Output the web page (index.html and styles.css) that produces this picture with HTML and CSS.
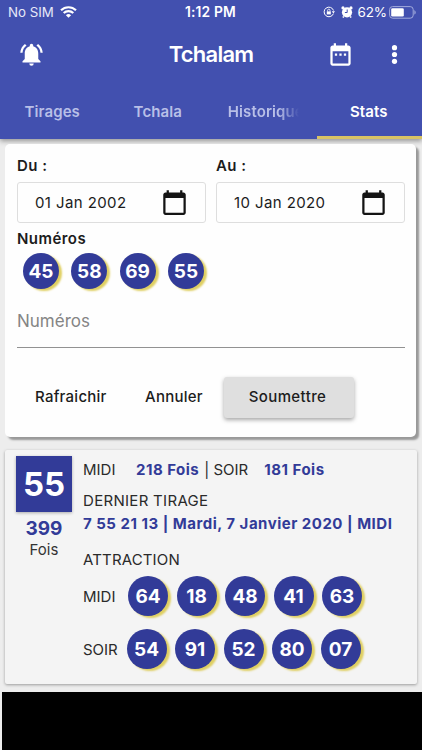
FILE: index.html
```
<!DOCTYPE html>
<html lang="fr">
<head>
<meta charset="utf-8">
<title>Tchalam</title>
<link rel="stylesheet" href="styles.css">
</head>
<body>
<div class="app">
  <header class="header">
    <div class="status">
      <div class="status-left">
        <span class="carrier">No SIM</span>
        <svg class="wifi" width="17" height="12" viewBox="0 0 17 12" fill="none" stroke="#fff" stroke-width="2.1"><path d="M1 4.3a10.7 10.7 0 0 1 15 0M3.7 7.1a6.8 6.8 0 0 1 9.6 0"/><path d="M8.5 11.8 5.9 9.2a3.8 3.8 0 0 1 5.2 0z" fill="#fff" stroke="none"/></svg>
      </div>
      <span class="clock">1:12 PM</span>
      <div class="status-right">
        <svg width="12" height="12" viewBox="0 0 12 12" fill="none" stroke="#fff"><path d="M10.4 7.7A4.8 4.8 0 1 1 10.5 4.5"/><path d="M8.8 5.2h3.2L10.4 7.4z" fill="#fff" stroke="none"/><rect x="3.8" y="5.4" width="4" height="3" fill="#fff" stroke="none"/><path d="M4.6 5.6V4.4a1.2 1.2 0 0 1 2.4 0v1.2" stroke-width=".8"/></svg>
        <svg class="alarm" width="12" height="12" viewBox="0 0 12 12"><g fill="#fff"><circle cx="6" cy="6.3" r="5.1"/><circle cx="2" cy="1.9" r="1.6"/><circle cx="10" cy="1.9" r="1.6"/><path d="m2 9.8 1.4 1.1-1 1.1-1-.8zM10 9.8l-1.4 1.1 1 1.1 1-.8z"/></g><path d="M6.2 3.5v3H3.9" fill="none" stroke="#4250af"/></svg>
        <span class="percent">62%</span>
        <svg class="battery" width="27" height="13" viewBox="0 0 27 13"><rect x=".6" y=".6" width="23.6" height="11.6" rx="3" fill="none" stroke="#a3abdc"/><rect x="2.2" y="2.2" width="12.6" height="8.4" rx="1.3" fill="#fff"/><path d="M25.4 4.2c1.7.7 1.7 3.7 0 4.4z" fill="#a3abdc"/></svg>
      </div>
    </div>
    <div class="toolbar">
      <svg class="bell" width="27" height="27" viewBox="0 0 24 24" fill="#fff"><path d="M7.58 4.08 6.15 2.65C3.75 4.48 2.17 7.3 2.03 10.5h2c.15-2.65 1.51-4.97 3.55-6.42zm12.39 6.42h2c-.15-3.2-1.73-6.02-4.12-7.85l-1.42 1.43c2.02 1.45 3.39 3.77 3.54 6.42z"/><path d="M18 11c0-3.07-1.64-5.64-4.5-6.32V4c0-.83-.67-1.5-1.5-1.5s-1.5.67-1.5 1.5v.68C7.63 5.36 6 7.92 6 11v5l-2 2v1h16v-1l-2-2z"/><path d="M10 20h4a2 2 0 0 1-4 0z"/></svg>
      <h1 class="title">Tchalam</h1>
      <div class="actions">
        <svg width="27" height="27" viewBox="0 0 24 24" fill="#fff"><path d="M9 11H7v2h2v-2zm4 0h-2v2h2v-2zm4 0h-2v2h2v-2zm2-7h-1V2h-2v2H8V2H6v2H5c-1.11 0-1.99.9-1.99 2L3 20c0 1.1.89 2 2 2h14c1.1 0 2-.9 2-2V6c0-1.1-.9-2-2-2zm0 16H5V9h14v11z"/></svg>
        <svg width="27" height="27" viewBox="0 0 27 27" fill="#fff"><circle cx="13.5" cy="6.7" r="2.6"/><circle cx="13.5" cy="13.5" r="2.6"/><circle cx="13.5" cy="20.3" r="2.6"/></svg>
      </div>
    </div>
    <nav class="tabs">
      <span class="tab">Tirages</span>
      <span class="tab">Tchala</span>
      <span class="tab"><span class="fade">Historique</span></span>
      <span class="tab active">Stats</span>
    </nav>
  </header>

  <section class="card search">
    <div class="dates">
      <div class="field">
        <span class="label">Du :</span>
        <div class="date"><span>01 Jan 2002</span>
          <svg width="27" height="27" viewBox="0 0 24 24" fill="#141414"><path d="M20 3h-1V1h-2v2H7V1H5v2H4c-1.1 0-2 .9-2 2v16c0 1.1.9 2 2 2h16c1.1 0 2-.9 2-2V5c0-1.1-.9-2-2-2zm0 18H4V8h16v13z"/></svg></div>
      </div>
      <div class="field">
        <span class="label">Au :</span>
        <div class="date"><span>10 Jan 2020</span>
          <svg width="27" height="27" viewBox="0 0 24 24" fill="#141414"><path d="M20 3h-1V1h-2v2H7V1H5v2H4c-1.1 0-2 .9-2 2v16c0 1.1.9 2 2 2h16c1.1 0 2-.9 2-2V5c0-1.1-.9-2-2-2zm0 18H4V8h16v13z"/></svg></div>
      </div>
    </div>
    <span class="label numbers-label">Numéros</span>
    <div class="balls small"><b>45</b><b>58</b><b>69</b><b>55</b></div>
    <div class="input">Numéros</div>
    <div class="buttons">
      <span class="btn refresh">Rafraichir</span>
      <span class="btn cancel">Annuler</span>
      <span class="btn submit">Soumettre</span>
    </div>
  </section>

  <section class="card result">
    <div class="summary">
      <div class="number">55</div>
      <div class="count">399</div>
      <div class="times">Fois</div>
    </div>
    <div class="details">
      <div class="row counts"><span class="midi">MIDI</span><strong>218 Fois</strong><span class="soir">| SOIR</span><strong>181 Fois</strong></div>
      <div class="row caption">DERNIER TIRAGE</div>
      <div class="row last"><strong>7 55 21 13 | Mardi, 7 Janvier 2020 | MIDI</strong></div>
      <div class="row attraction">ATTRACTION</div>
      <div class="draw"><span class="midi-name">MIDI</span><div class="balls"><b>64</b><b>18</b><b>48</b><b>41</b><b>63</b></div></div>
      <div class="draw"><span class="soir-name">SOIR</span><div class="balls"><b>54</b><b>91</b><b>52</b><b>80</b><b>07</b></div></div>
    </div>
  </section>
  <footer class="banner"></footer>
</div>
</body>
</html>
```
FILE: styles.css
```
* { box-sizing: border-box; }
body { margin: 0; background: #ededed; color: #1c1c1c; font-family: Inter, "Liberation Sans", sans-serif; font-size: 16px; white-space: nowrap; }
svg { display: block; flex: none; }
.app { width: 422px; height: 750px; overflow: hidden; display: flex; flex-direction: column; }

.header { height: 139px; flex: none; background: #4250af; color: #fff; box-shadow: 0 2px 5px rgba(0,0,0,.38); }
.status { height: 24px; display: grid; grid-template-columns: 1fr auto 1fr; align-items: center; padding: 0 6px 0 8px; font-size: 13.5px; }
.status-left, .status-right { display: flex; align-items: center; }
.status-right { justify-content: flex-end; }
.carrier { letter-spacing: 0; color: #e6e8f8; font-size: 13.3px; }
.wifi { margin-left: 6px; }
.clock { font-weight: 600; font-size: 13.8px; letter-spacing: .15px; margin-left: -3px; }
.alarm { margin: 0 4.5px 0 6px; }
.percent { letter-spacing: -.1px; font-size: 13.5px; }
.battery { margin-left: 2px; }
.toolbar { height: 60px; display: grid; grid-template-columns: 1fr auto 1fr; align-items: center; padding: 1px 14px 0 18px; }
.title { margin: -1px 4px 0 0; font-size: 22px; font-weight: 600; letter-spacing: -.75px; }
.actions { display: flex; justify-content: flex-end; gap: 27px; }
.tabs { height: 55px; display: grid; grid-template-columns: repeat(4, 1fr); font-weight: 600; font-size: 15px; letter-spacing: .1px; color: #b8bfe7; }
.tab { display: flex; justify-content: center; align-items: center; border-bottom: 3px solid transparent; min-width: 0; padding: 2px 1px 0 0; }
.fade { width: 71px; overflow: hidden; mask-image: linear-gradient(90deg, #000 72%, transparent 100%); }
.active { color: #fff; border-color: #d8c365; }

.search { height: 293px; flex: none; margin: 5px 6px 0 5px; padding: 12px 11px 0 12px; background: #fefefe; border-radius: 5px; box-shadow: 3px 3px 2px #999; position: relative; }
.dates { display: flex; gap: 10px; }
.field { flex: 1; }
.label { display: block; font-weight: 600; font-size: 15px; line-height: 20px; letter-spacing: .45px; }
.date { height: 41px; margin-top: 6px; border: 1px solid #dedede; border-radius: 3px; padding: 0 17px; display: flex; align-items: center; justify-content: space-between; font-size: 15px; letter-spacing: .4px; }
.date span { margin-top: -1px; }
.numbers-label { margin-top: 6px; }
.balls { display: flex; gap: 8.5px; }
.balls b { width: 40px; height: 40px; border-radius: 50%; background: #323b98; color: #fff; display: flex; align-items: center; justify-content: center; font-size: 19px; font-weight: 700; box-shadow: 3px 2px 2px #dfcf61; }
.small { margin: 4px 0 0 6px; gap: 12.3px; }
.small b { width: 36px; height: 36px; }
.input { margin-top: 22px; height: 37px; border-bottom: 1px solid #929292; color: #858585; font-size: 17px; line-height: 21px; }
.buttons { display: flex; margin: 28.5px 0 0 18px; align-items: center; height: 41px; font-weight: 500; font-size: 15px; letter-spacing: .25px; }
.refresh, .cancel { margin-top: -1px; }
.refresh { width: 110px; }
.cancel { width: 78.5px; }
.submit { width: 130px; height: 41px; line-height: 40px; padding-right: 2px; letter-spacing: .4px; text-align: center; background: #dfdfdf; border-radius: 3px; box-shadow: 0 2px 4px rgba(0,0,0,.35); }

.result { height: 234px; flex: none; margin: 12.5px 5px 0; padding: 6px 10px 0 11px; background: #f4f4f4; border-radius: 2px; box-shadow: 0 1px 3px rgba(0,0,0,.35); display: flex; }
.summary { width: 56px; text-align: center; margin-right: 11px; }
.number { height: 56px; line-height: 56px; background: #323b98; color: #fff; font-size: 33px; font-weight: 700; box-shadow: 0 1px 3px rgba(0,0,0,.3); }
.count { margin-top: 5px; font-size: 19px; line-height: 24px; font-weight: 700; color: #323b98; }
.times { font-size: 15px; line-height: 18px; color: #333; }
.details { font-size: 15px; color: #2a2a2a; }
.details strong { color: #323b98; font-weight: 700; letter-spacing: .5px; }
.row { line-height: 20px; height: 20px; }
.counts { display: flex; margin-top: 4px; }
.midi { width: 53px; }
.soir { margin: 0 16px 0 5px; }
.caption { margin-top: 11px; letter-spacing: .3px; }
.last { margin-top: 3px; }
.attraction { margin-top: 16px; letter-spacing: .15px; }
.draw { display: flex; align-items: center; height: 40px; margin-top: 6.5px; }
.draw + .draw { margin-top: 13px; }
.midi-name { width: 45px; }
.soir-name { width: 43.5px; }
.banner { flex: 1; margin: 8.5px 0 0 2px; background: #000; }
```
